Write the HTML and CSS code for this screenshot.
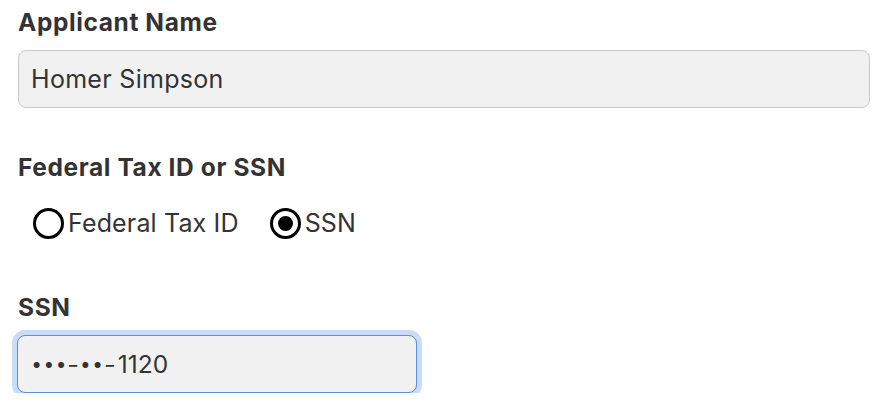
FILE: index.html
```html
<!DOCTYPE html>
<html lang="en">
<head>
<meta charset="utf-8">
<title>Applicant</title>
<link rel="stylesheet" href="styles.css">
</head>
<body>
<form class="form">
  <div class="field">
    <label class="label" for="name">Applicant Name</label>
    <input class="input input-wide" id="name" type="text" value="Homer Simpson" readonly>
  </div>
  <div class="field field-radio">
    <div class="label">Federal Tax ID or SSN</div>
    <div class="radios">
      <label class="radio"><span class="radio-circle"></span><span class="radio-text">Federal Tax ID</span></label>
      <label class="radio"><span class="radio-circle checked"></span><span class="radio-text">SSN</span></label>
    </div>
  </div>
  <div class="field field-ssn">
    <div class="label">SSN</div>
    <div class="input input-focus" id="ssn"><span class="ch dot">•</span><span class="ch dot">•</span><span class="ch dot">•</span><span class="ch dash">-</span><span class="ch dot">•</span><span class="ch dot">•</span><span class="ch dash">-</span><span class="digits">1120</span></div>
  </div>
</form>
</body>
</html>
```
FILE: styles.css
```css
html, body {
  margin: 0;
  padding: 0;
  background: #ffffff;
}
body {
  font-family: Inter, "Noto Sans", "Liberation Sans", sans-serif;
  color: #333333;
}
.form {
  padding: 7px 11px 0 18px;
  display: flex;
  flex-direction: column;
}
.field {
  display: flex;
  flex-direction: column;
}
.label {
  font-size: 24.5px;
  font-weight: 700;
  line-height: 30px;
  letter-spacing: 0.6px;
  color: #333333;
}
.input {
  box-sizing: border-box;
  height: 58px;
  margin-top: 13px;
  padding: 0 12px;
  border: 1.5px solid #c9c9c9;
  border-radius: 8px;
  background: #f1f1f1;
  font-family: Inter, "Noto Sans", "Liberation Sans", sans-serif;
  font-size: 25px;
  letter-spacing: 0.3px;
  color: #333333;
  outline: none;
}
.input-wide {
  width: 852px;
}
.input-focus {
  width: 400px;
  margin-left: -1px;
  padding-left: 12.5px;
  display: flex;
  align-items: center;
  border-color: #5a8fdf;
  box-shadow: 0 0 0 5px #c8dcf8;
}
.ch {
  display: inline-block;
  width: 12.2px;
  text-align: center;
  letter-spacing: 0;
}
.dot {
  font-size: 19px;
}
.dash {
  font-size: 27px;
  font-weight: 300;
}
.digits {
  margin-left: 2px;
  font-size: 24.5px;
  letter-spacing: 0;
}
.field-radio {
  margin-top: 44px;
}
.radios {
  display: flex;
  gap: 31px;
  margin-top: 25px;
  padding-left: 15px;
}
.radio {
  display: flex;
  align-items: center;
  gap: 4px;
  font-size: 25px;
  line-height: 32px;
  letter-spacing: 0.15px;
  color: #333333;
}
.radio-circle {
  box-sizing: border-box;
  width: 31px;
  height: 31px;
  border: 3px solid #000000;
  border-radius: 50%;
  display: flex;
  align-items: center;
  justify-content: center;
}
.radio-circle.checked::after {
  content: "";
  width: 15px;
  height: 15px;
  border-radius: 50%;
  background: #000000;
}
.field-ssn {
  margin-top: 53px;
}
```
